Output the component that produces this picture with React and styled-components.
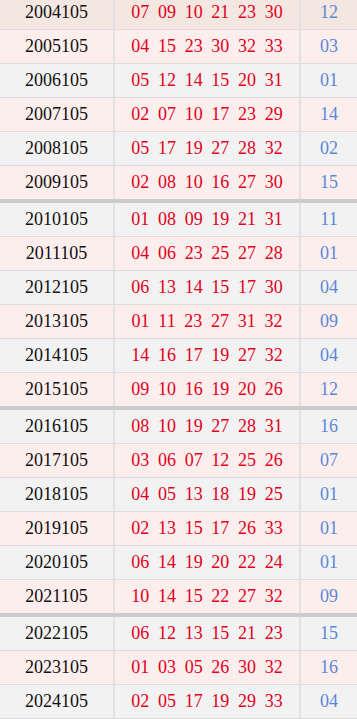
import React from 'react';
import styled, { createGlobalStyle } from 'styled-components';

const GlobalStyle = createGlobalStyle`
    html, body {
        margin: 0;
        padding: 0;
        background: #ffffff;
        overflow: hidden;
    }
`;

const rows = [
    ['2004105', '07 09 10 21 23 30', '12'],
    ['2005105', '04 15 23 30 32 33', '03'],
    ['2006105', '05 12 14 15 20 31', '01'],
    ['2007105', '02 07 10 17 23 29', '14'],
    ['2008105', '05 17 19 27 28 32', '02'],
    ['2009105', '02 08 10 16 27 30', '15'],
    ['2010105', '01 08 09 19 21 31', '11'],
    ['2011105', '04 06 23 25 27 28', '01'],
    ['2012105', '06 13 14 15 17 30', '04'],
    ['2013105', '01 11 23 27 31 32', '09'],
    ['2014105', '14 16 17 19 27 32', '04'],
    ['2015105', '09 10 16 19 20 26', '12'],
    ['2016105', '08 10 19 27 28 31', '16'],
    ['2017105', '03 06 07 12 25 26', '07'],
    ['2018105', '04 05 13 18 19 25', '01'],
    ['2019105', '02 13 15 17 26 33', '01'],
    ['2020105', '06 14 19 20 22 24', '01'],
    ['2021105', '10 14 15 22 27 32', '09'],
    ['2022105', '06 12 13 15 21 23', '15'],
    ['2023105', '01 03 05 26 30 32', '16'],
    ['2024105', '02 05 17 19 29 33', '04'],
];

const backgrounds = {
    active: '#f4e7e1',
    pink: '#fdeeee',
    grey: '#f2f2f2',
};

// Styles
const Table = styled.div`
    display: flex;
    flex-direction: column;
    width: 357px;
    margin-top: -4px;
    font-family: "Liberation Serif", "DejaVu Serif", serif;
    font-size: 18px;
`;

const Row = styled.div`
    display: grid;
    grid-template-columns: 115px 186px 56px;
    height: ${props => (props.$divider ? 37 : 34)}px;
    box-sizing: border-box;
    background: ${props => backgrounds[props.$tone]};
    border-bottom: ${props => (props.$divider ? '4px solid #cbcbcb' : '1px solid #dcdcdc')};
`;

const Cell = styled.div`
    display: flex;
    align-items: center;
    justify-content: center;
    border-right: ${props => (props.$last ? 'none' : '2px solid #e2e0e0')};
    padding-left: ${props => props.$shift || 0}px;
`;

const Issue = styled.span`
    color: #111111;
`;

const Balls = styled.div`
    display: flex;
    gap: 8.7px;
    color: #e2001a;
`;

const Blue = styled.span`
    color: #5b88d6;
`;

const App = () => (
    <>
        <GlobalStyle />
        <Table>
            {rows.map(([issue, reds, blue], i) => (
                <Row
                    key={issue}
                    $tone={i === 0 ? 'active' : i % 2 === 1 ? 'pink' : 'grey'}
                    $divider={i === 5 || i === 11 || i === 17}
                >
                    <Cell>
                        <Issue>{issue}</Issue>
                    </Cell>
                    <Cell>
                        <Balls>
                            {reds.split(' ').map((n, j) => (
                                <span key={j}>{n}</span>
                            ))}
                        </Balls>
                    </Cell>
                    <Cell $last>
                        <Blue>{blue}</Blue>
                    </Cell>
                </Row>
            ))}
        </Table>
    </>
);

export default App;
